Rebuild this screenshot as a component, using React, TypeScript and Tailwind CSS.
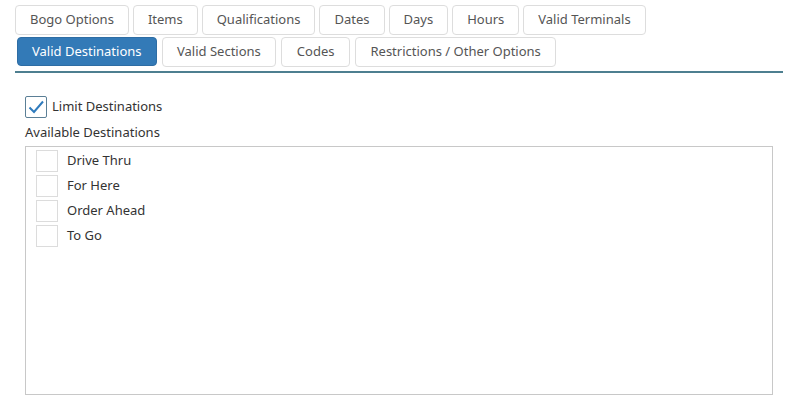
const rowOne = ['Bogo Options', 'Items', 'Qualifications', 'Dates', 'Days', 'Hours', 'Valid Terminals'];
const rowTwo = ['Valid Destinations', 'Valid Sections', 'Codes', 'Restrictions / Other Options'];
const destinations = ['Drive Thru', 'For Here', 'Order Ahead', 'To Go'];

function Tab({label, active, wide}: {label: string; active?: boolean; wide?: boolean}) {
    return (
        <div
            className={
                active
                    ? 'h-[29px] px-[14px] flex items-center rounded-[4px] bg-[#337ab7] border border-[#2e6da4] text-white'
                    : (wide ? 'px-[14.5px] ' : 'px-[14px] ') +
                      'h-[30px] flex items-center rounded-[4px] bg-white border border-[#dddddd] text-[#555]'
            }>
            {label}
        </div>
    );
}

export default function App() {
    return (
        <div className="w-[797px] h-[413px] bg-white text-[13px] text-[#333] font-['Noto_Sans',sans-serif]">
            <div className="pt-[5px] pl-[15px] pr-[14px]">
                <div className="flex gap-[4px]">
                    {rowOne.map((t) => <Tab key={t} label={t}/>)}
                </div>
                <div className="flex gap-[5px] pl-[2px] mt-[2px]">
                    {rowTwo.map((t, i) => <Tab key={t} label={t} active={i === 0} wide/>)}
                </div>
                <div className="mt-[4px] h-[2px] bg-[#4e7f90]"/>
            </div>
            <div className="pl-[25px] pr-[24px] pt-[23px]">
                <div className="flex items-center gap-[5px]">
                    <div className="w-[22px] h-[22px] border border-[#5b7f96] rounded-[2px] flex items-center justify-center">
                        <svg width="18" height="18" viewBox="0 0 18 18">
                            <path d="M2.5 9.5 L7 14 L16 3.5" fill="none" stroke="#2f7bbd" strokeWidth="2"/>
                        </svg>
                    </div>
                    <span>Limit Destinations</span>
                </div>
                <div className="mt-[4px] leading-[20px]">Available Destinations</div>
                <div className="mt-[4px] h-[249px] border border-[#c8c8c8] pt-[1px] pl-[10px]">
                    {destinations.map((d) => (
                        <div key={d} className="h-[25px] flex items-center gap-[9px]">
                            <div className="w-[22px] h-[22px] border border-[#dcdcdc]"/>
                            <span>{d}</span>
                        </div>
                    ))}
                </div>
            </div>
        </div>
    );
}
